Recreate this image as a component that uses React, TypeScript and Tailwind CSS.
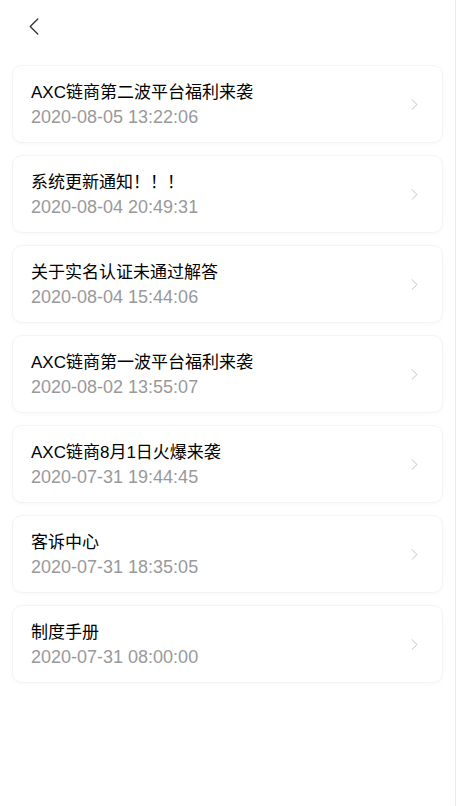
const notices = [
  { title: "AXC链商第二波平台福利来袭", time: "2020-08-05 13:22:06" },
  { title: "系统更新通知！！！", time: "2020-08-04 20:49:31" },
  { title: "关于实名认证未通过解答", time: "2020-08-04 15:44:06" },
  { title: "AXC链商第一波平台福利来袭", time: "2020-08-02 13:55:07" },
  { title: "AXC链商8月1日火爆来袭", time: "2020-07-31 19:44:45" },
  { title: "客诉中心", time: "2020-07-31 18:35:05" },
  { title: "制度手册", time: "2020-07-31 08:00:00" },
];

function Chevron({ className, left }: { className: string; left?: boolean }) {
  return (
    <svg viewBox="0 0 10 18" className={className} fill="none">
      <path
        d={left ? "M9 1 1 9l8 8" : "M1 1l8 8-8 8"}
        stroke="currentColor"
        strokeWidth="1.4"
        strokeLinecap="round"
        strokeLinejoin="round"
      />
    </svg>
  );
}

export default function App() {
  return (
    <div
      className="min-h-[806px] w-[456px] border-r border-[#ececec] bg-white"
      style={{ fontFamily: '"Liberation Sans", "Noto Sans CJK SC", sans-serif' }}
    >
      <header className="flex h-[53px] items-center pl-[29px]">
        <Chevron left className="h-[17px] w-[10px] text-[#333]" />
      </header>

      <ul className="flex flex-col gap-3 px-3 pt-3">
        {notices.map((n) => (
          <li
            key={n.title}
            className="flex h-[78px] items-center justify-between rounded-[10px] border border-[#f4f4f4] bg-white pl-[18px] pr-6 shadow-[0_1px_4px_rgba(0,0,0,0.03)]"
          >
            <div className="flex flex-col pt-[2px]">
              <span className="text-[17px] leading-[25px] text-black">{n.title}</span>
              <span className="text-[18px] leading-[25px] text-[#999]">{n.time}</span>
            </div>
            <Chevron className="h-[11px] w-[7px] text-[#b4b8c0]" />
          </li>
        ))}
      </ul>
    </div>
  );
}
